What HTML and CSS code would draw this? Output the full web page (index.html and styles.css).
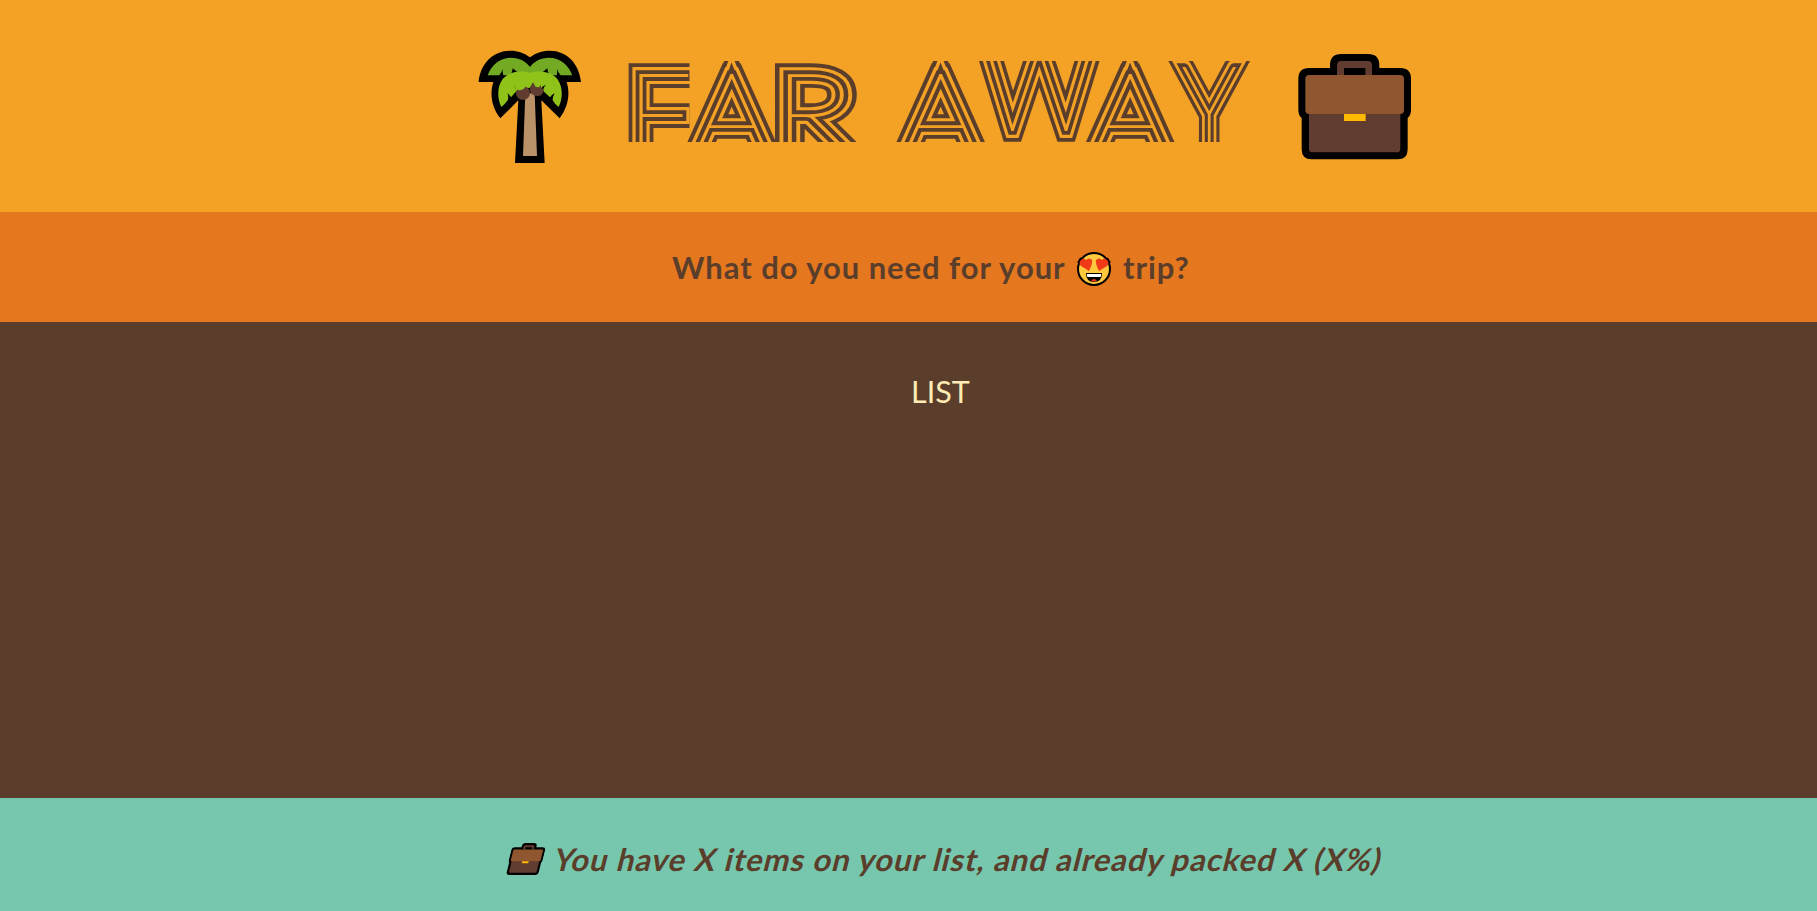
FILE: index.html
```html
<!DOCTYPE html>
<html lang="en">
<head>
<meta charset="utf-8">
<title>Far Away</title>
<link rel="stylesheet" href="styles.css">
</head>
<body>
<div class="app">
  <header class="banner">
    <svg class="palm" viewBox="0 0 420 450" aria-hidden="true">
      <path d="M56 156C60 103 98 62 150 62C174 62 194 69 210 82C226 69 246 62 270 62C322 62 358 103 363 156H320C332 194 323 233 299 265L244 211L254 399H165L175 211L121 265C96 233 88 194 100 156Z" fill="#000"/>
      <path d="M83 136C95 103 121 83 153 83C178 83 198 94 210 111C222 94 242 83 267 83C299 83 325 103 337 136H302Q294 128 291 117Q292 128 290 136H270Q262 127 262 115L240 133H180L158 115Q158 127 150 136H130Q128 128 127 117Q126 128 118 136Z" fill="#73aa24"/>
      <path d="M196 190H224L231 378H189Z" fill="#bb9167"/>
      <path d="M124 231C111 205 111 170 128 147C149 123 185 121 210 129C235 121 271 123 292 147C309 170 309 205 296 231Q285 224 278 211Q278 199 284 190Q276 193 270 202L249 182Q250 173 257 164Q247 168 242 178L224 176L217 158Q216 169 208 174L184 174L170 187L163 163Q164 176 170 182L153 202Q148 193 142 190Q147 201 143 211Q134 224 124 231Z" fill="#8fc31a"/>
      <circle cx="189" cy="189" r="21" fill="#613c31"/>
      <path d="M210 178Q211 166 222 158Q221 168 232 172Q240 172 243 164Q241 173 252 181Q249 192 243 196C228 202 210 195 210 178Z" fill="#613c31"/>
      <path d="M165 164Q164 176 174 180Q190 184 199 166L180 160Z" fill="#8fc31a"/>
    </svg>
    <h1 class="title" aria-label="Far Away">
      <svg class="title-art" viewBox="600 30 680 150">
        <g class="lettering">
          <text id="l1" transform="translate(627 155)">F</text>
          <use href="#l1" class="ring ring-a"/><use href="#l1" class="ring ring-b"/><use href="#l1" class="ring ring-c"/><use href="#l1" class="ring ring-d"/>
          <path class="cover" d="M689.5 50H740V160H689.5Z"/>
          <text id="l2" transform="translate(692.5 155) scale(1.07 1)">A</text>
          <use href="#l2" class="ring ring-a"/><use href="#l2" class="ring ring-b"/><use href="#l2" class="ring ring-c"/><use href="#l2" class="ring ring-d"/>
          <text id="l3" transform="translate(773 155) scale(1.2 1)">R</text>
          <use href="#l3" class="ring ring-a"/><use href="#l3" class="ring ring-b"/><use href="#l3" class="ring ring-c"/><use href="#l3" class="ring ring-d"/>
          <text id="l4" transform="translate(901.5 155) scale(1.07 1)">A</text>
          <use href="#l4" class="ring ring-a"/><use href="#l4" class="ring ring-b"/><use href="#l4" class="ring ring-c"/><use href="#l4" class="ring ring-d"/>
          <text id="l5" transform="translate(984 130) scale(.96 1)">W</text>
          <use href="#l5" class="ring ring-a"/><use href="#l5" class="ring ring-b"/><use href="#l5" class="ring ring-c"/><use href="#l5" class="ring ring-d"/>
          <text id="l6" transform="translate(1091 155) scale(1.07 1)">A</text>
          <use href="#l6" class="ring ring-a"/><use href="#l6" class="ring ring-b"/><use href="#l6" class="ring ring-c"/><use href="#l6" class="ring ring-d"/>
          <text id="l7" transform="translate(1182 148) scale(.83 1)">Y</text>
          <use href="#l7" class="ring ring-a"/><use href="#l7" class="ring ring-b"/><use href="#l7" class="ring ring-c"/><use href="#l7" class="ring ring-d"/>
        </g>
        <path class="cover" d="M600 30H1280V61H600ZM600 142H1280V180H600Z"/>
      </svg>
    </h1>
    <svg class="case" viewBox="0 0 450 390" aria-hidden="true">
      <g id="briefcase">
        <path d="M87 84H150V76Q150 42 184 42H264Q298 42 298 76V84H361Q393 84 393 116V210Q393 226 383 234V328Q383 358 353 358H95Q65 358 65 328V234Q55 226 55 210V116Q55 84 87 84Z" fill="#000"/>
        <path d="M87 221H361V326Q361 337 350 337H98Q87 337 87 326Z" fill="#613c31"/>
        <path d="M171 105V76Q171 63 184 63H263Q276 63 276 76V105H256V84H192V105Z" fill="#613c31"/>
        <path d="M88 105H360Q372 105 372 117V211Q372 222 361 222H87Q76 222 76 211V117Q76 105 88 105Z" fill="#90562f"/>
        <path d="M192 222H257V243H192Z" fill="#ffb900"/>
      </g>
    </svg>
  </header>

  <section class="question">
    <h3 class="ask"><span class="ask-start">What do you need for your</span><svg class="face" viewBox="0 0 34 36" aria-hidden="true">
      <circle cx="17" cy="18" r="16" fill="#ffc83d" stroke="#000" stroke-width="2"/>
      <path d="M1 12L4 7M33 12L30 7" stroke="#000" stroke-width="2"/>
      <path d="M12 20L4 15Q1 12 4 9Q7 6 9 9Q12 6 15 9Q16 12 12 20ZM22 20L30 15Q33 12 30 9Q27 6 25 9Q22 6 19 9Q18 12 22 20Z" fill="#f03a17"/>
      <path d="M9 22H25Q25 31 17 31Q9 31 9 22Z" fill="#000"/>
      <path d="M10 23H24V25Q24 26 23 26H11Q10 26 10 25Z" fill="#fff"/>
      <path d="M14 30Q17 26 20 30Q17 31 14 30Z" fill="#f03a17"/>
    </svg><span class="ask-end">trip?</span></h3>
  </section>

  <main class="list">LIST</main>

  <footer class="stats">
    <svg class="mini-case" viewBox="55 42 338 316" aria-hidden="true"><use href="#briefcase"/></svg>
    <em class="summary">You have X items on your list, and already packed X (X%)</em>
  </footer>
</div>
</body>
</html>
```
FILE: styles.css
```css
* { box-sizing: border-box; margin: 0; padding: 0; }

body {
  font-family: Lato, "Open Sans", sans-serif;
  font-size: 31px;
  color: #5a3e2b;
}

.app {
  height: 100vh;
  display: grid;
  grid-template-rows: 212px 110px 1fr 113px;
  overflow: hidden;
}

.banner {
  display: flex;
  align-items: center;
  padding: 0 0 2px 460px;
  background: #f4a226;
}
.palm { width: 140px; height: 150px; }
.title { width: 680px; height: 150px; }
.title-art { display: block; width: 680px; height: 150px; }
.case { width: 150px; height: 130px; }

.lettering { font-family: Lato, sans-serif; font-size: 115px; font-weight: 100; }
.ring { stroke-linejoin: miter; stroke-miterlimit: 3; }
.ring-a { fill: #5a3e2b; stroke: #5a3e2b; stroke-width: 23.4px; }
.ring-b { fill: #f4a226; stroke: #f4a226; stroke-width: 15.8px; }
.ring-c { fill: #5a3e2b; stroke: #5a3e2b; stroke-width: 9.4px; }
.ring-d { fill: #f4a226; stroke: #f4a226; stroke-width: 1.8px; }
.cover { fill: #f4a226; }

.question { background: #e5771f; padding: 33px 0 0 672px; }
.ask { display: flex; align-items: center; height: 44px; font-size: 31px; font-weight: 700; letter-spacing: 0.95px; white-space: nowrap; }
.ask-start { width: 405px; }
.face { width: 34px; height: 36px; margin: 3px 12px 0 0; }

.list {
  background: #5a3e2b;
  color: #ffebb3;
  padding: 50px 0 0 911px;
  font-size: 30.5px;
  line-height: 38px;
}

.stats {
  display: flex;
  align-items: center;
  padding: 0 0 0 509px;
  background: #76c7ad;
  white-space: nowrap;
}
.mini-case { width: 34px; height: 32px; margin: 9px 12px 0 0; transform: skewX(-14deg); }
.summary { font-weight: 700; font-style: normal; letter-spacing: 0.96px; margin-top: 8px; transform: skewX(-14deg); }
```
